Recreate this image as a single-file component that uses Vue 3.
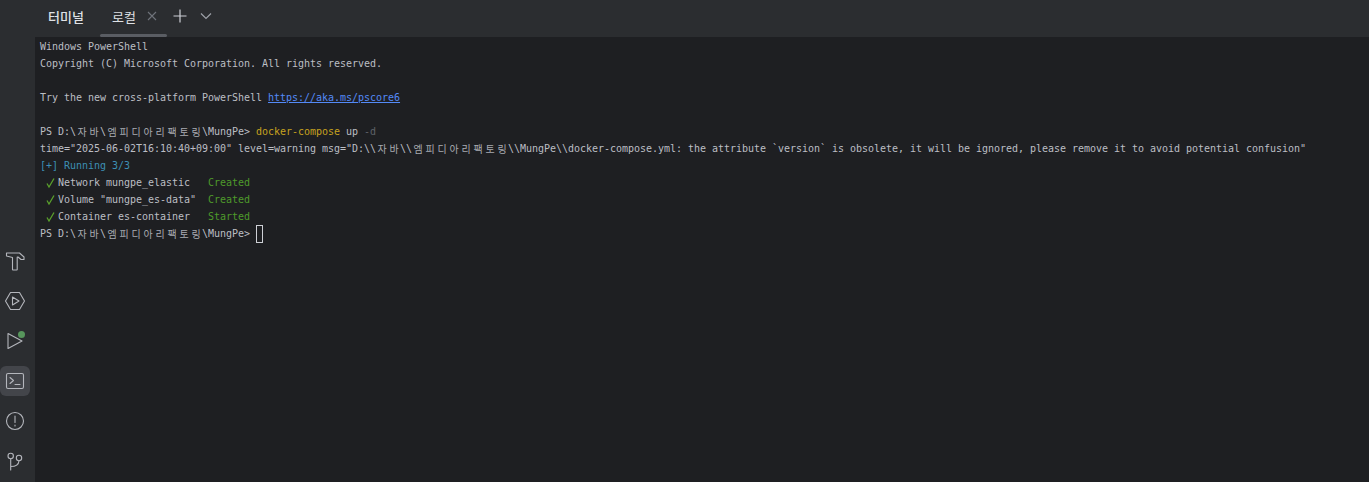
<script setup>
const ko = (s) => ({ t: s, k: true })
const prompt = [{ t: 'PS D:\\' }, ko('자바'), { t: '\\' }, ko('엠피디아리팩토링'), { t: '\\MungPe> ' }]
const lines = [
  [{ t: 'Windows PowerShell' }],
  [{ t: 'Copyright (C) Microsoft Corporation. All rights reserved.' }],
  [],
  [{ t: 'Try the new cross-platform PowerShell ' }, { t: 'https://aka.ms/pscore6', c: 'link' }],
  [],
  [...prompt, { t: 'docker-compose', c: 'yellow' }, { t: ' up ' }, { t: '-d', c: 'dim' }],
  [{ t: 'time="2025-06-02T16:10:40+09:00" level=warning msg="D:\\\\' }, ko('자바'), { t: '\\\\' }, ko('엠피디아리팩토링'), { t: '\\\\MungPe\\\\docker-compose.yml: the attribute `version` is obsolete, it will be ignored, please remove it to avoid potential confusion"' }],
  [{ t: '[+] Running 3/3', c: 'blue' }],
  [{ t: ' ' }, { check: true }, { t: ' Network mungpe_elastic   ' }, { t: 'Created', c: 'green' }],
  [{ t: ' ' }, { check: true }, { t: ' Volume "mungpe_es-data"  ' }, { t: 'Created', c: 'green' }],
  [{ t: ' ' }, { check: true }, { t: ' Container es-container   ' }, { t: 'Started', c: 'green' }],
  [...prompt, { cursor: true }],
]
</script>

<template>
  <div class="window">
    <nav class="rail">
      <button class="tool">
        <svg viewBox="0 0 20 20" width="20" height="20"><path d="M1.500 2h13l4.500 4v2.500h-3L13 6h-.8v12.500a.5.5 0 0 1-.5.5H8a.5.5 0 0 1-.5-.5V6.500L1.500 5z" /></svg>
      </button>
      <button class="tool">
        <svg viewBox="0 0 20 20" width="20" height="20"><path d="M5.500 1.500h9l5 8.500-5 8.500h-9L.5 10z" /><path d="M7.500 6 14 10l-6.500 4z" /></svg>
      </button>
      <button class="tool badge">
        <svg viewBox="0 0 20 20" width="20" height="20"><path d="M3 2.500 17 10 3 17.500z" /></svg>
      </button>
      <button class="tool active">
        <svg viewBox="0 0 20 20" width="20" height="20"><rect x="1.500" y="2.500" width="17" height="15" rx="1.500" /><path d="m5 6.500 3.500 3-3.500 3M10 13.500h5" /></svg>
      </button>
      <button class="tool">
        <svg viewBox="0 0 20 20" width="20" height="20"><circle cx="10" cy="10" r="8.500" /><path d="M10 5v6.500M10 14v1" /></svg>
      </button>
      <button class="tool">
        <svg viewBox="0 0 20 20" width="20" height="20"><circle cx="5.700" cy="5" r="2.700" /><circle cx="14" cy="7" r="2.700" /><path d="M5.700 7.700V19M5.700 15.500c5 0 8-1.500 8.300-5.800" /></svg>
      </button>
    </nav>
    <main class="panel">
      <header class="tabs">
        <span class="title">터미널</span>
        <div class="tab">
          <span class="tab-name">로컬</span>
          <svg class="close" viewBox="0 0 10 10" width="10" height="10"><path d="m1 1 8 8M9 1 1 9" /></svg>
        </div>
        <svg class="plus" viewBox="0 0 14 14" width="14" height="14"><path d="M7 .5v13M.5 7h13" /></svg>
        <svg class="chev" viewBox="0 0 12 8" width="12" height="8"><path d="m1 1.500 5 5 5-5" /></svg>
      </header>
      <section class="term">
        <div v-for="(line, i) in lines" :key="i" class="line">
          <template v-for="(p, j) in line" :key="j">
            <span v-if="p.cursor" class="cursor"></span>
            <svg v-else-if="p.check" class="check" viewBox="0 0 6 17" width="6" height="17"><path d="M1 9.500 3 13 8 4.500" /></svg>
            <span v-else-if="p.k" class="ko"><span v-for="ch in p.t" :key="ch" class="kc">{{ ch }}</span></span>
            <span v-else :class="p.c">{{ p.t }}</span>
          </template>
        </div>
      </section>
    </main>
  </div>
</template>

<style>
html, body { margin: 0; background: #1e1f22; }
</style>

<style scoped>
.window { display: flex; width: 1369px; height: 482px; overflow: hidden; background: #1e1f22; }
.rail {
  width: 35px; flex: none; box-sizing: border-box; background: #2b2d30;
  display: flex; flex-direction: column; align-items: flex-start; justify-content: flex-end; gap: 10px; padding-bottom: 6px;
}
.tool { width: 30px; height: 30px; padding: 0; border: 0; border-radius: 6px; background: none; display: flex; align-items: center; justify-content: center; position: relative; }
.tool svg { fill: none; stroke: #b4b6bc; stroke-width: 1.100; stroke-linejoin: round; stroke-linecap: round; }
.tool.active { background: #43454a; }
.badge::after { content: ''; position: absolute; width: 7px; height: 7px; border-radius: 50%; background: #57965c; top: 5px; right: 5px; }
.panel { flex: 1; display: flex; flex-direction: column; min-width: 0; }
.tabs { height: 37px; flex: none; box-sizing: border-box; background: #2b2d30; display: flex; align-items: center; padding: 0 0 5px 13px; font: 13px "Noto Sans CJK KR", sans-serif; color: #dfe1e5; position: relative; }
.title { font-weight: 500; width: 52px; }
.tab { width: 67px; align-self: stretch; margin-bottom: -5px; padding: 0 0 5px 12px; box-sizing: border-box; display: flex; align-items: center; gap: 11px; position: relative; }
.tab::after { content: ''; position: absolute; left: 0; right: 0; bottom: 0; height: 3px; border-radius: 2px; background: #5a5d63; }
.close { stroke: #6f737a; stroke-width: 1.100; fill: none; flex: none; }
.plus { stroke: #ced0d6; stroke-width: 1.200; fill: none; margin-left: 6px; flex: none; }
.chev { stroke: #9da0a8; stroke-width: 1.200; fill: none; margin-left: 13px; flex: none; }
.term { padding: 1px 0 0 5px; font: 10px/17px "DejaVu Sans Mono", "Liberation Mono", monospace; letter-spacing: -0.02px; color: #bcbec4; }
.line { height: 17px; white-space: pre; }
.ko { display: inline-flex; vertical-align: top; }
.kc { width: 12px; text-align: center; font-family: "Noto Sans CJK KR", sans-serif; font-size: 10px; color: #a9abb1; letter-spacing: 0; }
.link { color: #548af7; text-decoration: underline; }
.yellow { color: #c7a21f; }
.dim { color: #5f6268; }
.blue { color: #3d8fb5; }
.green { color: #4e9a2b; }
.check { display: inline-block; vertical-align: top; overflow: visible; fill: none; stroke: #5aa02c; stroke-width: 1.300; }
.cursor { display: inline-block; width: 5px; height: 16px; border: 1px solid #ced0d6; vertical-align: top; }
</style>
